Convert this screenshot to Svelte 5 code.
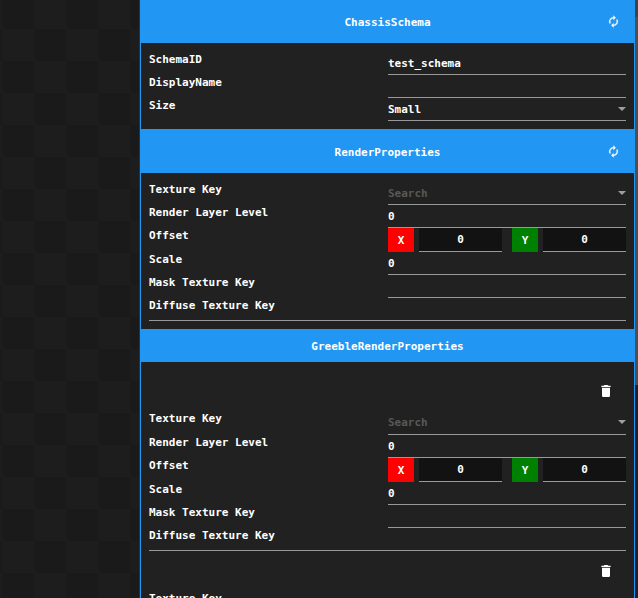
<script>
  const renderFields = [
    { label: 'Texture Key', kind: 'select', placeholder: 'Search' },
    { label: 'Render Layer Level', kind: 'text', value: '0' },
    { label: 'Offset', kind: 'vector', x: '0', y: '0' },
    { label: 'Scale', kind: 'text', value: '0' },
    { label: 'Mask Texture Key', kind: 'text', value: '' },
    { label: 'Diffuse Texture Key', kind: 'none' }
  ];
  const chassisFields = [
    { label: 'SchemaID', kind: 'text', value: 'test_schema' },
    { label: 'DisplayName', kind: 'text', value: '' },
    { label: 'Size', kind: 'select', value: 'Small' }
  ];
  const greebles = [renderFields, [{ label: 'Texture Key', kind: 'select' }]];
</script>

{#snippet header(title, reload)}
  <header class:reload>
    <span>{title}</span>
    {#if reload}
      <svg class="renew" viewBox="0 0 24 24"><path d="M12 6v3l4-4-4-4v3c-4.42 0-8 3.58-8 8 0 1.57.46 3.03 1.24 4.26L6.7 14.8c-.45-.83-.7-1.79-.7-2.8 0-3.31 2.69-6 6-6zm6.76 1.74L17.3 9.2c.44.84.7 1.79.7 2.8 0 3.31-2.69 6-6 6v-3l-4 4 4 4v-3c4.42 0 8-3.58 8-8 0-1.57-.46-3.03-1.24-4.26z" /></svg>
    {/if}
  </header>
{/snippet}

{#snippet fields(list)}
  {#each list as f}
    <div class="row {f.kind}">
      <span class="label">{f.label}</span>
      {#if f.kind === 'vector'}
        <div class="vec">
          <b class="x">X</b><span class="num">{f.x}</span>
          <b class="y">Y</b><span class="num">{f.y}</span>
        </div>
      {:else if f.kind !== 'none'}
        <div class="input">
          <span class:placeholder={!f.value}>{f.value || f.placeholder || ''}</span>
          {#if f.kind === 'select'}<i class="caret"></i>{/if}
        </div>
      {/if}
    </div>
  {/each}
{/snippet}

<div class="app">
  <div class="canvas"></div>
  <main>
    {@render header('ChassisSchema', true)}
    <section class="body">{@render fields(chassisFields)}</section>
    <div class="second">{@render header('RenderProperties', true)}</div>
    <section class="body">{@render fields(renderFields)}</section>
    {@render header('GreebleRenderProperties', false)}
    <section class="greebles">
      {#each greebles as g}
        <div class="greeble">
          <div class="tools">
            <svg viewBox="0 0 24 24"><path d="M19 4h-3.5l-1-1h-5l-1 1H5v2h14M6 19a2 2 0 0 0 2 2h8a2 2 0 0 0 2-2V7H6v12z" /></svg>
          </div>
          {@render fields(g)}
        </div>
      {/each}
    </section>
  </main>
  <aside><div class="cap"></div><div class="thumb"></div></aside>
</div>

<style>
  :global(body) {
    margin: 0;
    background: #1b1b1b;
    overflow: hidden;
  }
  .app {
    display: flex;
    width: 638px;
    height: 598px;
    overflow: hidden;
    font: bold 11px/14px 'DejaVu Sans Mono', monospace;
    color: #fff;
  }
  .canvas {
    width: 139px;
    flex: none;
    border-right: 1px solid #303030;
    background: repeating-conic-gradient(#1a1a1a 0 25%, #1d1d1d 0 50%) 2px 29px / 64px 64px;
  }
  main {
    width: 493px;
    flex: none;
    border: solid #2196f3;
    border-width: 0 1px;
    background: #212121;
  }
  header {
    height: 33px;
    display: flex;
    align-items: center;
    justify-content: center;
    position: relative;
    box-sizing: border-box;
    padding-top: 2px;
    background: #2196f3;
  }
  header.reload {
    height: 43px;
  }
  .second header {
    height: 44px;
    padding-top: 4px;
  }
  svg {
    fill: #fff;
    display: block;
  }
  .renew {
    position: absolute;
    right: 14px;
    top: 15.4px;
    width: 13px;
    height: 13px;
    stroke: #fff;
    stroke-width: 0.5;
  }
  .second .renew {
    top: 16.4px;
  }
  .body {
    padding: 9px 8px 8px;
  }
  .row {
    display: flex;
    height: 23px;
  }
  .row.vector {
    height: 24px;
  }
  .row.none {
    box-sizing: border-box;
    border-bottom: 1px solid #999;
  }
  .label {
    width: 239px;
    flex: none;
    padding-top: 1px;
  }
  .input {
    flex: 1;
    display: flex;
    align-items: center;
    justify-content: space-between;
    box-sizing: border-box;
    border-bottom: 1px solid #999;
  }
  .input span {
    padding-top: 2px;
  }
  .placeholder {
    color: #585858;
  }
  .caret {
    border: 4px solid transparent;
    border-top-color: #9e9e9e;
    border-bottom: 0;
  }
  .vec {
    flex: 1;
    display: flex;
    line-height: 24px;
    text-align: center;
  }
  .vec b {
    width: 26px;
    height: 24px;
    margin-right: 5px;
    line-height: 26px;
  }
  .x {
    background: #f00;
  }
  .y {
    background: #008000;
    margin-left: 10px;
  }
  .num {
    flex: 1;
    box-sizing: border-box;
    background: #121212;
    border-bottom: 1px solid #999;
  }
  .greebles {
    padding: 9px 8px 0;
  }
  .greeble .select .label,
  .greeble .select .input span {
    padding-top: 0;
  }
  .greeble .caret {
    margin-bottom: 2px;
  }
  .tools {
    height: 29px;
    padding: 12px 12px 0 0;
    display: flex;
    justify-content: flex-end;
  }
  .tools svg {
    width: 16px;
    height: 16px;
  }
  aside {
    flex: 1;
    background: #212121;
  }
  .cap {
    height: 17px;
    background: #424242;
  }
  .thumb {
    height: 368px;
    background: #4f4f4f;
  }
</style>
